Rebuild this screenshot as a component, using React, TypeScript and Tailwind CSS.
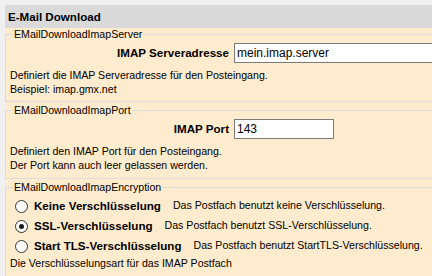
import React, { useState } from 'react';

const font = { fontFamily: '"Liberation Sans", Arial, sans-serif' };

type GroupProps = { title: string; children: React.ReactNode; className?: string };

// WinForms-style group box: a fieldset with its legend sitting on the top line
const GroupBox: React.FC<GroupProps> = ({ title, children, className = '' }) => (
  <fieldset className={`border border-r-0 border-[#dcdcdc] w-[440px] ${className}`}>
    <legend className="ml-[7px] px-[1px] text-[10.6px] leading-[13px] text-black">{title}</legend>
    {children}
  </fieldset>
);

const Radio: React.FC<{ checked: boolean; label: string; hint: string; onSelect: () => void }> = ({
  checked,
  label,
  hint,
  onSelect,
}) => (
  <div className="flex items-center h-[20px] pl-[9px] cursor-default whitespace-nowrap" onClick={onSelect}>
    <span className="w-[13px] h-[13px] shrink-0 rounded-full border border-[#333333] bg-white flex items-center justify-center">
      {checked && <span className="w-[5px] h-[5px] rounded-full bg-[#1a1a1a]" />}
    </span>
    <span className="ml-[6px] text-[11.6px] font-bold text-black">{label}</span>
    <span className="ml-[12px] text-[10.6px] text-black">{hint}</span>
  </div>
);

export default function App() {
  const [server, setServer] = useState('mein.imap.server');
  const [port, setPort] = useState('143');
  const [encryption, setEncryption] = useState<'none' | 'ssl' | 'tls'>('ssl');

  return (
    <div className="w-[432px] h-[276px] overflow-hidden bg-[#f0f0f0] pt-[5px] pl-[5px]" style={font}>
      <div className="h-[23px] bg-[#dadada] flex items-center pl-[3px] text-[11.6px] font-bold text-black">
        E-Mail Download
      </div>
      <div className="bg-[#ffebcd] h-[260px] flex flex-col">
        <GroupBox title="EMailDownloadImapServer" className="h-[74px]">
          <div className="flex items-center mt-[2px]">
            <label className="w-[223px] text-right text-[11.6px] font-bold text-black">IMAP Serveradresse</label>
            <input
              value={server}
              onChange={(e) => setServer(e.target.value)}
              className="ml-[5px] w-[220px] h-[20px] border border-[#7a7a7a] bg-white px-[2px] text-[12px] text-black outline-none"
            />
          </div>
          <p className="mt-[5px] pl-[4px] text-[10.6px] leading-[14px] text-black">
            Definiert die IMAP Serveradresse für den Posteingang.
            <br />
            Beispiel: imap.gmx.net
          </p>
        </GroupBox>
        <GroupBox title="EMailDownloadImapPort" className="h-[75px] mt-[2px]">
          <div className="flex items-center mt-[2px]">
            <label className="w-[223px] text-right text-[11.6px] font-bold text-black">IMAP Port</label>
            <input
              value={port}
              onChange={(e) => setPort(e.target.value)}
              className="ml-[5px] w-[100px] h-[20px] border border-[#7a7a7a] bg-white px-[2px] text-[12px] text-black outline-none"
            />
          </div>
          <p className="mt-[5px] pl-[4px] text-[10.6px] leading-[14px] text-black">
            Definiert den IMAP Port für den Posteingang.
            <br />
            Der Port kann auch leer gelassen werden.
          </p>
        </GroupBox>
        <GroupBox title="EMailDownloadImapEncryption" className="h-[100px] mt-[2px]">
          <div className="flex flex-col mt-[2px]">
            <Radio
              checked={encryption === 'none'}
              label="Keine Verschlüsselung"
              hint="Das Postfach benutzt keine Verschlüsselung."
              onSelect={() => setEncryption('none')}
            />
            <Radio
              checked={encryption === 'ssl'}
              label="SSL-Verschlüsselung"
              hint="Das Postfach benutzt SSL-Verschlüsselung."
              onSelect={() => setEncryption('ssl')}
            />
            <Radio
              checked={encryption === 'tls'}
              label="Start TLS-Verschlüsselung"
              hint="Das Postfach benutzt StartTLS-Verschlüsselung."
              onSelect={() => setEncryption('tls')}
            />
          </div>
          <p className="pl-[4px] text-[10.6px] leading-[14px] text-black">
            Die Verschlüsselungsart für das IMAP Postfach
          </p>
        </GroupBox>
      </div>
    </div>
  );
}
